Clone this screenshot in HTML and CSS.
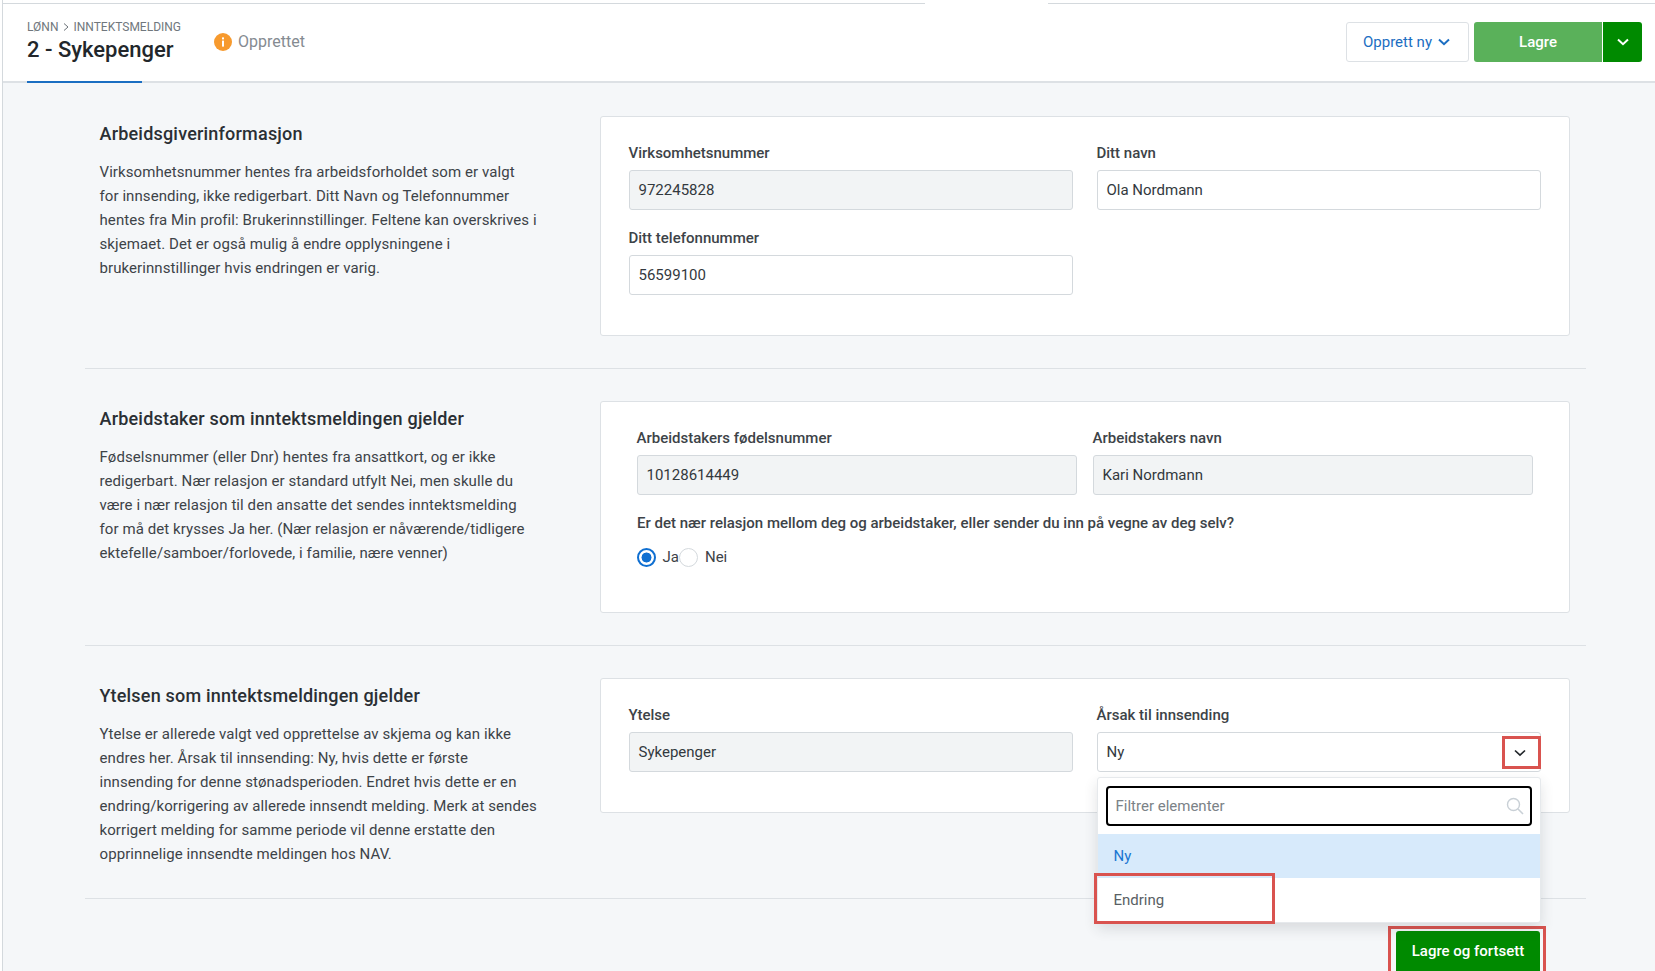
FILE: index.html
```html
<!DOCTYPE html>
<html lang="no">
<head>
<meta charset="utf-8">
<title>Inntektsmelding</title>
<link rel="stylesheet" href="styles.css">
</head>
<body>
<div class="app">
  <div class="tabstrip"><div class="tabline tabline-a"></div><div class="tabgap"></div><div class="tabline tabline-b"></div></div>
  <header class="header">
    <div class="title-block">
      <div class="crumbs"><span>LØNN</span><svg class="crumb-sep" viewBox="0 0 8 10" width="8" height="10"><path d="M2 1.5 6 5 2 8.5" fill="none" stroke="#6b7278" stroke-width="1"/></svg><span>INNTEKTSMELDING</span></div>
      <h1 class="page-title">2 - Sykepenger</h1>
      <div class="title-underline"></div>
    </div>
    <div class="status">
      <svg class="status-icon" viewBox="0 0 18 18" width="18" height="18"><circle cx="9" cy="9" r="9" fill="#f79a2e"/><rect x="8" y="7.6" width="2" height="6" fill="#fff"/><rect x="8" y="4.4" width="2" height="2" fill="#fff"/></svg>
      <span>Opprettet</span>
    </div>
    <div class="actions">
      <button class="btn-outline">Opprett ny<svg viewBox="0 0 12 8" width="12" height="8"><path d="M1 1.5 6 6.2 11 1.5" fill="none" stroke="#1b6ec2" stroke-width="2"/></svg></button>
      <div class="split">
        <button class="btn-save">Lagre</button>
        <button class="btn-caret"><svg viewBox="0 0 12 8" width="12" height="8"><path d="M1 1.5 6 6.2 11 1.5" fill="none" stroke="#fff" stroke-width="2"/></svg></button>
      </div>
    </div>
  </header>

  <main class="main">
    <section class="section s1">
      <div class="intro">
        <h2>Arbeidsgiverinformasjon</h2>
        <p>Virksomhetsnummer hentes fra arbeidsforholdet som er valgt<br>for innsending, ikke redigerbart. Ditt Navn og Telefonnummer<br>hentes fra Min profil: Brukerinnstillinger. Feltene kan overskrives i<br>skjemaet. Det er også mulig å endre opplysningene i<br>brukerinnstillinger hvis endringen er varig.</p>
      </div>
      <div class="card card-1">
        <div class="field-grid">
          <div class="field"><label>Virksomhetsnummer</label><div class="input ro">972245828</div></div>
          <div class="field"><label>Ditt navn</label><div class="input">Ola Nordmann</div></div>
          <div class="field"><label>Ditt telefonnummer</label><div class="input">56599100</div></div>
        </div>
      </div>
    </section>

    <section class="section s2">
      <div class="intro">
        <h2>Arbeidstaker som inntektsmeldingen gjelder</h2>
        <p>Fødselsnummer (eller Dnr) hentes fra ansattkort, og er ikke<br>redigerbart. Nær relasjon er standard utfylt Nei, men skulle du<br>være i nær relasjon til den ansatte det sendes inntektsmelding<br>for må det krysses Ja her. (Nær relasjon er nåværende/tidligere<br>ektefelle/samboer/forlovede, i familie, nære venner)</p>
      </div>
      <div class="card card-2">
        <div class="field-grid tight">
          <div class="field"><label>Arbeidstakers fødelsnummer</label><div class="input ro">10128614449</div></div>
          <div class="field"><label>Arbeidstakers navn</label><div class="input ro">Kari Nordmann</div></div>
        </div>
        <div class="question">Er det nær relasjon mellom deg og arbeidstaker, eller sender du inn på vegne av deg selv?</div>
        <div class="radios">
          <span class="radio on"></span><span class="radio-label">Ja</span>
          <span class="radio"></span><span class="radio-label">Nei</span>
        </div>
      </div>
    </section>

    <section class="section s3">
      <div class="intro">
        <h2>Ytelsen som inntektsmeldingen gjelder</h2>
        <p>Ytelse er allerede valgt ved opprettelse av skjema og kan ikke<br>endres her. Årsak til innsending: Ny, hvis dette er første<br>innsending for denne stønadsperioden. Endret hvis dette er en<br>endring/korrigering av allerede innsendt melding. Merk at sendes<br>korrigert melding for samme periode vil denne erstatte den<br>opprinnelige innsendte meldingen hos NAV.</p>
      </div>
      <div class="card card-3">
        <div class="field-grid">
          <div class="field"><label>Ytelse</label><div class="input ro">Sykepenger</div></div>
          <div class="field select-field">
            <label>Årsak til innsending</label>
            <div class="input select">Ny
              <span class="mark mark-caret"><svg viewBox="0 0 12 8" width="12" height="8"><path d="M1 1.5 6 6.2 11 1.5" fill="none" stroke="#22272b" stroke-width="1.7"/></svg></span>
            </div>
            <div class="menu">
              <div class="filter"><span>Filtrer elementer</span><svg viewBox="0 0 18 18" width="18" height="18"><circle cx="7.5" cy="7.5" r="6" fill="none" stroke="#c9d0d6" stroke-width="1.4"/><path d="M12 12 17 17" stroke="#c9d0d6" stroke-width="1.6"/></svg></div>
              <div class="option active">Ny</div>
              <div class="option">Endring</div>
              <div class="mark mark-option"></div>
            </div>
          </div>
        </div>
      </div>
    </section>

    <div class="footer-row">
      <div class="submit-wrap"><button class="btn-submit">Lagre og fortsett</button></div>
    </div>
  </main>
</div>
</body>
</html>
```

FILE: styles.css
```css
* { box-sizing: border-box; }
html, body { margin: 0; height: 100%; overflow: hidden; background: #fff; }
body { font-family: Roboto, "Liberation Sans", sans-serif; color: #33393e; font-size: 15px; }
button { font-family: inherit; cursor: pointer; }

.app { margin-left: 2px; border-left: 1px solid #d4d9dd; height: 971px; background: #f5f7f9; display: flex; flex-direction: column; overflow: hidden; }

.tabstrip { display: flex; height: 4px; background: #fff; align-items: flex-end; margin-left: -1px; }
.tabline { height: 1px; background: #d4d9dd; }
.tabline-a { width: 923px; }
.tabgap { width: 123px; }
.tabline-b { flex: 1; }

.header { height: 79px; background: #fff; border-bottom: 2px solid #dde1e5; display: flex; align-items: flex-start; padding: 0 13px 0 24px; }
.title-block { width: 187px; position: relative; height: 77px; padding-top: 16px; }
.crumbs { display: flex; align-items: center; gap: 3.5px; font-size: 12px; line-height: 14px; color: #70777d; }
.page-title { margin: 2px 0 0; font-size: 22px; line-height: 28px; font-weight: 500; color: #22272b; }
.title-underline { position: absolute; left: 0; bottom: -2px; width: 115px; height: 2px; background: #1b6ec2; }
.status { display: flex; align-items: center; gap: 6px; margin-top: 26px; font-size: 16px; line-height: 24px; color: #858b91; }
.actions { margin-left: auto; display: flex; gap: 5px; margin-top: 18px; }
.btn-outline { width: 123px; height: 40px; background: #fff; border: 1px solid #dde1e5; border-radius: 3px; color: #1b6ec2; font-size: 15px; display: flex; align-items: center; justify-content: center; gap: 6px; padding: 0 2px 0 0; }
.split { display: flex; height: 40px; }
.btn-save { width: 128px; border: 0; background: #5ab15a; color: #fff; font-size: 15px; font-weight: 500; border-radius: 3px 0 0 3px; padding: 0; }
.btn-caret { width: 40px; border: 0; border-left: 1px solid #fff; background: #008a00; border-radius: 0 3px 3px 0; padding: 0; display: flex; align-items: center; justify-content: center; }

.main { padding: 0 69px 0 82px; flex: 1; }
.section { display: flex; align-items: flex-start; border-bottom: 1px solid #dde1e5; padding-top: 32px; padding-bottom: 32px; }
.intro { width: 515px; padding: 6px 0 0 14.5px; flex: none; }
.s1 .intro { padding-top: 7px; }
.intro h2 { margin: 0 0 14px; font-size: 18px; line-height: 24px; font-weight: 500; letter-spacing: .2px; color: #2a2f34; }
.intro p { margin: 0; font-size: 15px; line-height: 24px; letter-spacing: .08px; color: #3d4348; white-space: nowrap; }

.card { width: 970px; background: #fff; border: 1px solid #dde1e5; border-radius: 3px; }
.card-1 { height: 220px; margin-top: 1px; padding: 26px 28px 0; }
.card-2 { height: 212px; padding: 26px 36px 0; }
.card-3 { height: 135px; padding: 26px 28px 0; }

.field-grid { display: grid; grid-template-columns: 444px 444px; column-gap: 24px; row-gap: 18px; }
.field-grid.tight { grid-template-columns: 440px 440px; column-gap: 16px; }
label { display: block; font-size: 15px; line-height: 20px; font-weight: 500; color: #3d4348; margin-bottom: 7px; margin-left: -.5px; }
.input { height: 40px; border: 1px solid #d4d9dd; border-radius: 3px; background: #fff; padding: 0 8.5px; line-height: 38px; font-size: 15px; color: #33393e; }
.input.ro { background: #f2f4f5; }
.question { margin-top: 18px; font-size: 15px; line-height: 20px; font-weight: 500; color: #3d4348; }
.radios { display: flex; align-items: center; margin-top: 14px; height: 20px; margin-left: -.5px; }
.radio { width: 19px; height: 19px; border-radius: 50%; border: 1px solid #d4d9dd; background: #fff; flex: none; }
.radio.on { border: 2px solid #0f6fd1; background: radial-gradient(circle, #0f6fd1 0 4.8px, #fff 5.2px); }
.radio-label { margin-left: 7px; font-size: 15px; line-height: 20px; color: #3d4348; }

.select-field { position: relative; }
.select { position: relative; }
.mark { position: absolute; border: 3px solid #d9534f; }
.mark-caret { right: -1px; top: 3px; width: 39px; height: 33px; display: flex; align-items: center; justify-content: center; background: #fff; padding-right: 3px; }
.menu { position: absolute; left: 0; right: 0; top: 72px; height: 146px; background: #fff; border: 1px solid #e6e9ec; border-radius: 3px; box-shadow: 0 6px 14px rgba(40, 50, 60, .14); z-index: 2; }
.filter { margin: 8px; height: 40px; border: 2px solid #000; border-radius: 4px; display: flex; align-items: center; justify-content: space-between; padding: 0 6px 0 7.5px; color: #7b8287; font-size: 15px; }
.option { height: 44px; line-height: 44px; padding: 0 15.5px; font-size: 15px; color: #595f64; }
.option.active { background: #d7eafb; color: #1a76d2; }
.mark-option { left: -4px; top: 95px; width: 181px; height: 51px; }

.footer-row { display: flex; justify-content: flex-end; }
.submit-wrap { margin-top: 27px; margin-right: 40px; border: 3px solid #d9534f; border-bottom: 0; padding: 2px 3px 0 5px; height: 45px; }
.btn-submit { width: 144px; height: 40px; background: #008a00; color: #fff; border: 0; border-radius: 3px 3px 0 0; font-size: 15px; font-weight: 500; padding: 0; }
```
